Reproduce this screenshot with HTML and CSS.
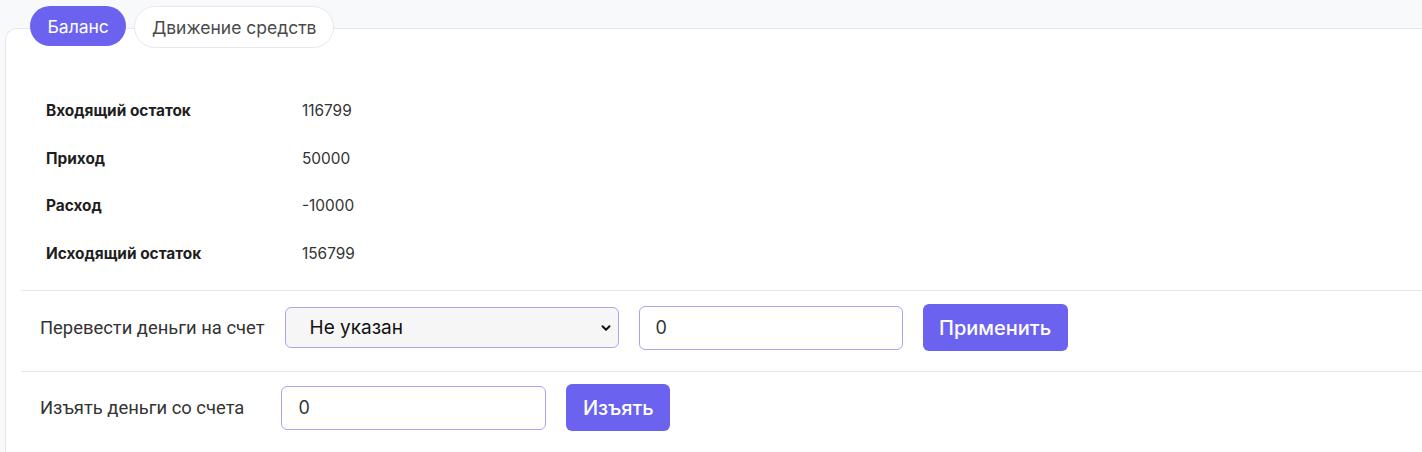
FILE: index.html
```html
<!DOCTYPE html>
<html lang="ru">
<head>
<meta charset="utf-8">
<link rel="stylesheet" href="styles.css">
</head>
<body>
<div class="tabs">
  <div class="tab active">Баланс</div>
  <div class="tab">Движение средств</div>
</div>
<div class="card">
  <div class="summary">
    <div class="row"><div class="k">Входящий остаток</div><div class="v">116799</div></div>
    <div class="row"><div class="k">Приход</div><div class="v">50000</div></div>
    <div class="row"><div class="k">Расход</div><div class="v">-10000</div></div>
    <div class="row"><div class="k">Исходящий остаток</div><div class="v">156799</div></div>
  </div>
  <div class="action a1">
    <span class="label">Перевести деньги на счет</span>
    <div class="select"><span>Не указан</span>
      <svg width="12" height="12" viewBox="0 0 12 12"><path d="M2.5 4.2 L6 7.7 L9.5 4.2" fill="none" stroke="#111" stroke-width="2" stroke-linecap="round" stroke-linejoin="round"/></svg>
    </div>
    <div class="input in1">0</div>
    <div class="btn wide">Применить</div>
  </div>
  <div class="action a2">
    <span class="label l2">Изъять деньги со счета</span>
    <div class="input">0</div>
    <div class="btn narrow">Изъять</div>
  </div>
</div>
</body>
</html>
```
FILE: styles.css
```css
html, body {
  margin: 0;
  padding: 0;
}
body {
  background: #f8f9fb;
  font-family: Inter, "Noto Sans", sans-serif;
  color: #222;
  overflow: hidden;
}
.tabs {
  display: flex;
  gap: 8px;
  padding: 6px 0 0 30px;
  position: relative;
  z-index: 1;
  align-items: flex-start;
}
.tab {
  box-sizing: border-box;
  padding: 0 16.5px;
  border-radius: 21px;
  display: flex;
  align-items: center;
  font-size: 17.5px;
  color: #4a4a4a;
  background: #fff;
  border: 1px solid #e6e8ef;
  height: 42px;
}
.tab.active {
  background: #6b63f0;
  color: #fff;
  border: none;
  height: 40px;
  padding: 0 17.5px;
}
.card {
  margin: -20px 0 0 5px;
  background: #fff;
  border: 1px solid #e4e7ee;
  border-right: none;
  border-bottom: none;
  border-radius: 12px 0 0 0;
  padding-left: 15px;
}
.summary {
  padding: 58px 0 13px 25px;
}
.row {
  display: grid;
  grid-template-columns: 256px 1fr;
  height: 47.6px;
  align-items: center;
  font-size: 15.4px;
}
.k {
  font-weight: 650;
  color: #1e1e1e;
}
.v {
  color: #333;
}
.action {
  border-top: 1px solid #e8e8ec;
  display: flex;
  align-items: center;
  gap: 20px;
  padding: 13px 0 20px 19px;
}
.a2 {
  padding: 12px 0 21px 19px;
}
.label {
  font-family: Roboto, "Noto Sans", sans-serif;
  font-size: 18.4px;
  color: #333;
}
.l2 {
  margin-right: 17px;
}
.select {
  width: 334px;
  height: 41px;
  box-sizing: border-box;
  border: 1px solid #aaa4f2;
  border-radius: 6px;
  background: #f6f6f6;
  display: flex;
  align-items: center;
  justify-content: space-between;
  padding: 0 6px 0 24px;
  font-size: 19px;
  color: #111;
}
.input {
  width: 265px;
  height: 44px;
  box-sizing: border-box;
  border: 1px solid #aaa4f2;
  border-radius: 6px;
  background: #fff;
  display: flex;
  align-items: center;
  padding-left: 16px;
  font-size: 18px;
  color: #333;
}
.in1 {
  width: 264px;
}
.btn {
  height: 47px;
  box-sizing: border-box;
  background: #6b63f0;
  color: #fff;
  border-radius: 6px;
  display: flex;
  align-items: center;
  justify-content: center;
  font-size: 20px;
  font-weight: 500;
}
.wide { width: 145px; }
.narrow { width: 104px; }
```
